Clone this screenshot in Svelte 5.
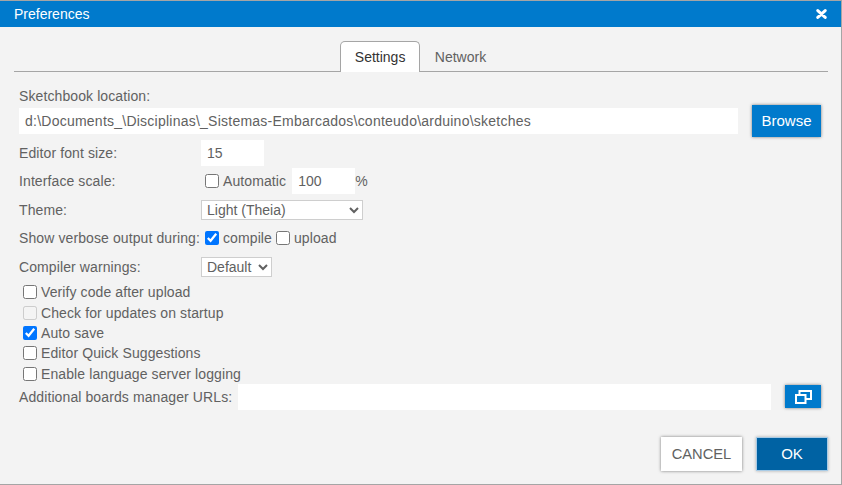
<script lang="ts">
	let tab = $state('settings');
	let sketchbook = $state('d:\\Documents_\\Disciplinas\\_Sistemas-Embarcados\\conteudo\\arduino\\sketches');
	let fontSize = $state(15);
	let scale = $state(100);
	let theme = $state('Light (Theia)');
	let warnings = $state('Default');

	const options = [
		{ label: 'Verify code after upload', checked: false, disabled: false },
		{ label: 'Check for updates on startup', checked: false, disabled: true },
		{ label: 'Auto save', checked: true, disabled: false },
		{ label: 'Editor Quick Suggestions', checked: false, disabled: false },
		{ label: 'Enable language server logging', checked: false, disabled: false }
	];
</script>

<div class="dialog">
	<header class="titlebar">
		<span>Preferences</span>
		<svg class="close" viewBox="0 0 11 10" width="11" height="10" aria-hidden="true">
			<path d="M1.8 1.600 9.200 8.400M9.200 1.600 1.800 8.400" stroke="#fff" stroke-width="3" stroke-linecap="round" fill="none" />
		</svg>
	</header>

	<div class="body">
		<nav class="tabs">
			<button class="tab" class:active={tab === 'settings'} onclick={() => (tab = 'settings')}>Settings</button>
			<button class="tab" class:active={tab === 'network'} onclick={() => (tab = 'network')}>Network</button>
		</nav>

		<div class="content">
			<div class="location-label">Sketchbook location:</div>
			<div class="location">
				<input class="text grow path" type="text" bind:value={sketchbook} />
				<button class="primary browse">Browse</button>
			</div>

			<div class="row font-row">
				<span class="label">Editor font size:</span>
				<input class="text small" type="number" bind:value={fontSize} />
			</div>

			<div class="row scale-row">
				<span class="label">Interface scale:</span>
				<label class="check"><input type="checkbox" />Automatic</label>
				<input class="text scale" type="number" bind:value={scale} />
				<span class="percent">%</span>
			</div>

			<div class="row theme-row">
				<span class="label">Theme:</span>
				<select class="theme" bind:value={theme}>
					<option>Light (Theia)</option>
					<option>Dark (Theia)</option>
				</select>
			</div>

			<div class="row verbose-row">
				<span class="label">Show verbose output during:</span>
				<label class="check"><input type="checkbox" checked />compile</label>
				<label class="check upload"><input type="checkbox" />upload</label>
			</div>

			<div class="row warnings-row">
				<span class="label">Compiler warnings:</span>
				<select class="warnings" bind:value={warnings}>
					<option>Default</option>
					<option>More</option>
					<option>All</option>
				</select>
			</div>

			<div class="options">
				{#each options as opt (opt.label)}
					<label class="check">
						<input type="checkbox" checked={opt.checked} disabled={opt.disabled} />{opt.label}
					</label>
				{/each}
			</div>

			<div class="boards">
				<span>Additional boards manager URLs:</span>
				<input class="text grow" type="text" />
				<button class="primary expand" aria-label="Edit URLs">
					<svg viewBox="0 0 17 14" width="17" height="14" aria-hidden="true">
						<path d="M4.500 4V1h11.500v8h-5.500M1 5h9.500v8H1z" fill="none" stroke="#fff" stroke-width="2" />
					</svg>
				</button>
			</div>
		</div>

		<footer class="actions">
			<button class="cancel">CANCEL</button>
			<button class="ok">OK</button>
		</footer>
	</div>
</div>

<style>
	:global(body) {
		margin: 0;
		background: #f3f3f3;
	}

	.dialog {
		box-sizing: border-box;
		width: 842px;
		height: 485px;
		border: 1px solid #a5a5a5;
		border-left: 0;
		background: #f3f3f3;
		color: #616161;
		font: 14px/1 'Liberation Sans', Arial, sans-serif;
		letter-spacing: 0.1px;
	}

	.titlebar {
		display: flex;
		align-items: center;
		justify-content: space-between;
		height: 26px;
		padding: 0 14px;
		background: #007acc;
		color: #fff;
		letter-spacing: 0;
	}

	.body {
		padding-top: 14px;
	}

	.tabs {
		display: flex;
		justify-content: center;
		height: 30px;
		margin: 0 13px 0 14px;
		padding-right: 1px;
		border-bottom: 1px solid #a5a5a5;
	}

	.tab {
		box-sizing: border-box;
		height: 31px;
		padding: 0 14px;
		border: 1px solid transparent;
		border-bottom: 0;
		border-radius: 5px 5px 0 0;
		background: none;
		color: #616161;
		font: inherit;
	}

	.tab.active {
		width: 80px;
		border-color: #a5a5a5;
		background: #fff;
		color: #333;
	}

	.content {
		padding: 17px 20px 0 19px;
	}

	.location-label {
		height: 19px;
		margin-top: -1px;
		padding-top: 1px;
	}

	.location {
		display: flex;
		align-items: center;
		gap: 14px;
		height: 26px;
	}

	.text {
		box-sizing: border-box;
		height: 26px;
		padding: 0;
		border: 0;
		outline: 0;
		background: #fff;
		color: #616161;
		font: inherit;
		appearance: textfield;
	}

	.grow {
		flex: 1;
		padding-left: 6px;
	}

	.path {
		letter-spacing: 0.24px;
	}

	.primary {
		border: 1px solid #007acc;
		background: #007acc;
		box-shadow: 0 0 3px rgba(0, 0, 0, 0.5);
		color: #fff;
		font: inherit;
	}

	.browse {
		width: 69px;
		height: 32px;
		padding: 0 0 2px;
		font-size: 15px;
		letter-spacing: 0;
	}

	.row {
		display: flex;
		align-items: center;
	}

	.label {
		flex: none;
		width: 182px;
	}

	.font-row {
		margin-top: 6px;
	}

	.small {
		width: 63px;
		padding-left: 6px;
	}

	.scale-row {
		height: 26px;
		margin-top: 2px;
	}

	.check {
		display: flex;
		align-items: center;
	}

	.check input {
		width: 14px;
		height: 14px;
		margin: 0 4px 0 0;
		accent-color: #0075ff;
	}

	.scale-row .check {
		margin-left: 4px;
	}

	.scale {
		width: 63px;
		margin-left: 6px;
		padding-left: 6px;
	}

	select {
		height: 20px;
		padding: 0 0 0 1px;
		border: 1px solid #cecece;
		border-radius: 0;
		outline: 0;
		background: #fff;
		color: #616161;
		font: inherit;
	}

	.theme {
		width: 162px;
	}

	.warnings {
		width: 71px;
	}

	.theme-row {
		margin-top: 6px;
	}

	.verbose-row {
		height: 20px;
		margin-top: 8px;
	}

	.verbose-row .check {
		margin-left: 4px;
	}

	.verbose-row .upload {
		margin-left: 4px;
	}

	.warnings-row {
		margin-top: 9px;
	}

	.options {
		display: flex;
		flex-direction: column;
		margin-top: 5px;
		padding-left: 4px;
	}

	.options .check {
		height: 20.4px;
	}

	.boards {
		display: flex;
		align-items: center;
		height: 26px;
		gap: 6px;
	}

	.expand {
		display: flex;
		align-items: center;
		justify-content: center;
		width: 36px;
		height: 23px;
		margin-left: 8px;
		padding: 0;
	}

	.actions {
		display: flex;
		justify-content: flex-end;
		gap: 14px;
		margin: 27px 13px 0 0;
	}

	.actions button {
		height: 34px;
		padding: 0;
		font: inherit;
	}

	.actions .cancel {
		width: 81px;
		border: 1px solid #fff;
		background: #fff;
		box-shadow: 0 0 3px rgba(0, 0, 0, 0.5);
		color: #616161;
		font-size: 14.7px;
		letter-spacing: 0;
	}

	.actions .ok {
		width: 72px;
		border: 1px solid #a8cbe6;
		background: #0062a3;
		box-shadow: 0 0 3px rgba(0, 0, 0, 0.3);
		color: #fff;
		font-size: 15px;
		letter-spacing: 0;
	}
</style>
